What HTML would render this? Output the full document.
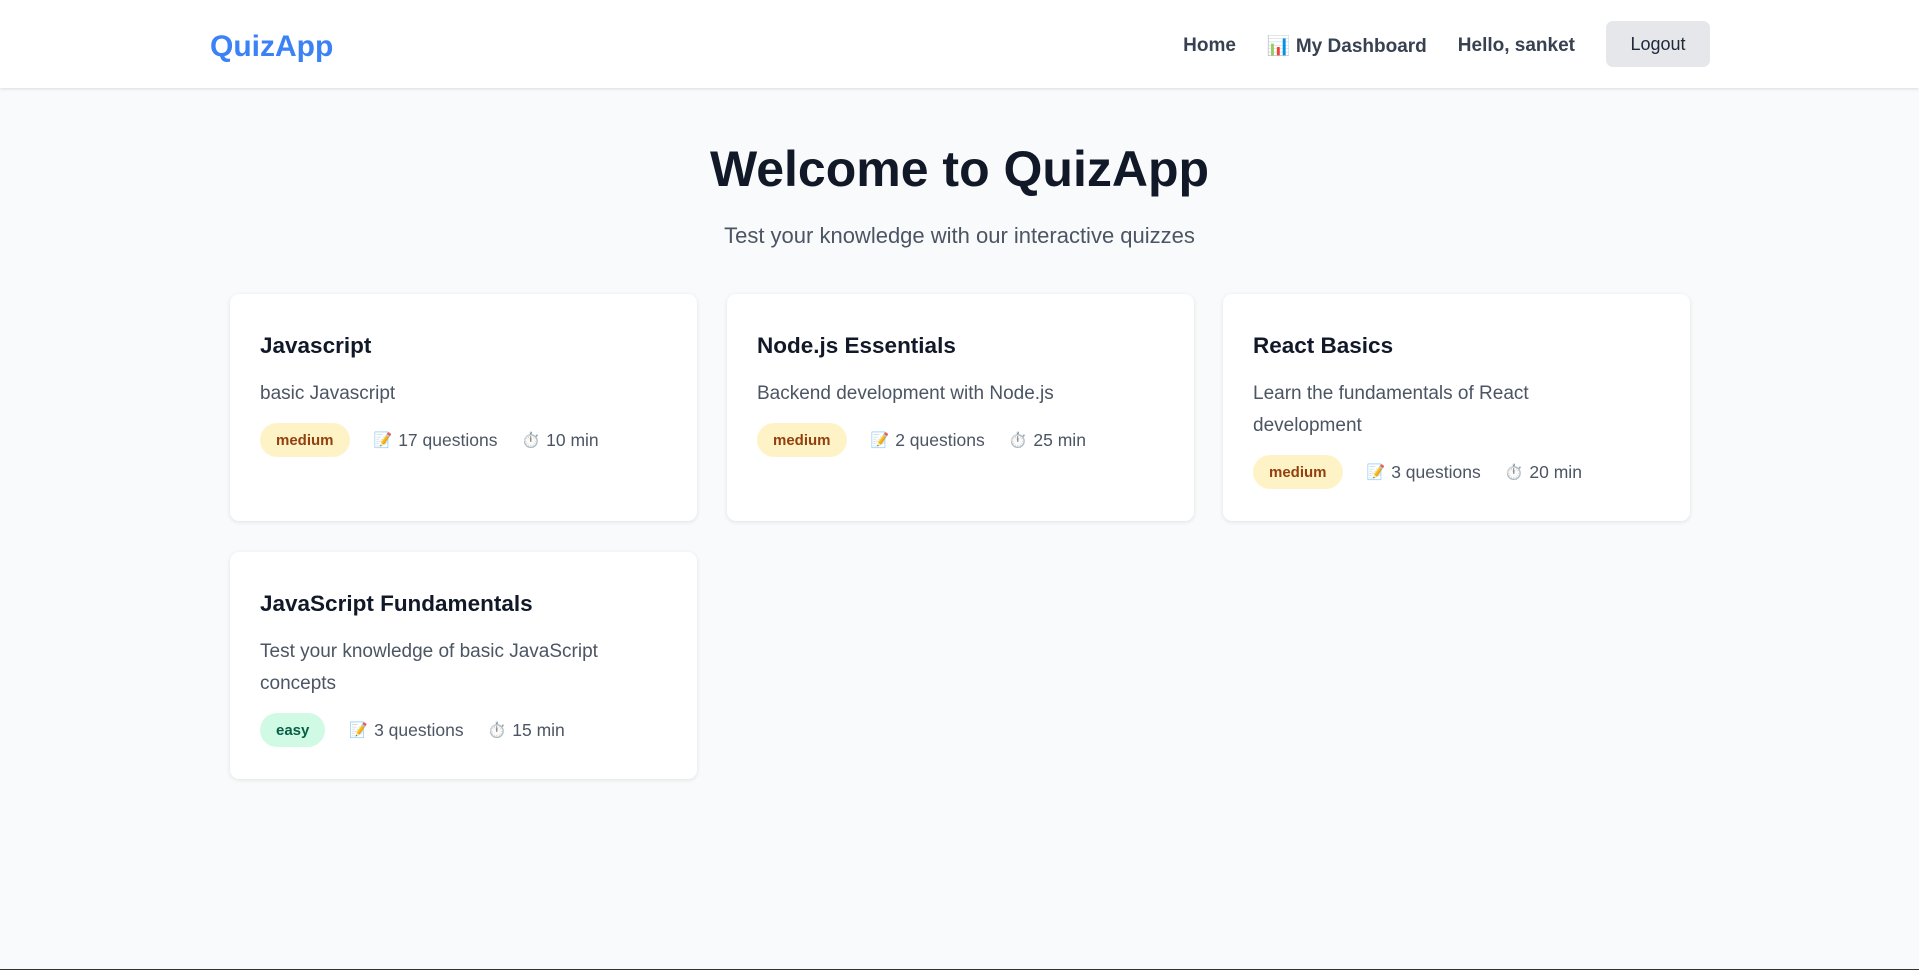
<!DOCTYPE html>
<html><head><meta charset="utf-8"><style>
*{box-sizing:border-box;margin:0;padding:0}
body{width:1919px;height:970px;background:#f9fafb;font-family:"Liberation Sans",sans-serif;color:#111827;overflow:hidden;position:relative}
nav{height:88px;background:#fff;box-shadow:0 1px 3px rgba(0,0,0,.12);position:relative}
.logo{position:absolute;left:210px;top:30px;font-size:30px;font-weight:700;color:#3b82f6}
.links{position:absolute;right:209px;top:21px;display:flex;align-items:center;height:46px;font-size:19px;font-weight:600;color:#374151}
.links span{margin-right:31px;position:relative;top:2px}
.btn{background:#e5e7eb;border-radius:7px;width:104px;height:46px;display:flex;align-items:center;justify-content:center;font-weight:400;font-size:18px;color:#1f2937}
h1{position:absolute;top:140px;width:100%;text-align:center;font-size:50px;font-weight:700;color:#111827}
.sub{position:absolute;top:223px;width:100%;text-align:center;font-size:22px;color:#4b5563}
.card{position:absolute;width:467px;height:227px;background:#fff;border-radius:9px;box-shadow:0 1px 4px rgba(0,0,0,.1);padding:37px 30px}
.card h3{font-size:22.5px;font-weight:600;color:#111827;margin-bottom:17px;line-height:30px}
.card p{font-size:19px;line-height:32px;color:#4b5563;margin-bottom:13px}
.meta{display:flex;align-items:center;font-size:17.5px;color:#4b5563}
.badge{height:34px;border-radius:17px;padding:0 16px;display:flex;align-items:center;font-size:15px;font-weight:600;margin-right:24px}
.med{background:#fef3c7;color:#92400e}
.easy{background:#d1fae5;color:#065f46}
.meta .i{font-size:15px;margin-right:6px}
.meta .q{margin-right:24px}
.line{position:absolute;left:0;bottom:0;width:100%;height:1px;background:#333}
</style></head><body>
<nav><div class="logo">QuizApp</div>
<div class="links"><span>Home</span><span>📊 My Dashboard</span><span>Hello, sanket</span><div class="btn">Logout</div></div></nav>
<h1>Welcome to QuizApp</h1>
<div class="sub">Test your knowledge with our interactive quizzes</div>

<div class="card" style="left:230px;top:294px"><h3>Javascript</h3><p>basic Javascript</p>
<div class="meta"><div class="badge med">medium</div><span class="i">📝</span><span class="q">17 questions</span><span class="i">⏱️</span><span>10 min</span></div></div>

<div class="card" style="left:727px;top:294px"><h3>Node.js Essentials</h3><p>Backend development with Node.js</p>
<div class="meta"><div class="badge med">medium</div><span class="i">📝</span><span class="q">2 questions</span><span class="i">⏱️</span><span>25 min</span></div></div>

<div class="card" style="left:1223px;top:294px"><h3>React Basics</h3><p>Learn the fundamentals of React<br>development</p>
<div class="meta"><div class="badge med">medium</div><span class="i">📝</span><span class="q">3 questions</span><span class="i">⏱️</span><span>20 min</span></div></div>

<div class="card" style="left:230px;top:552px"><h3>JavaScript Fundamentals</h3><p>Test your knowledge of basic JavaScript<br>concepts</p>
<div class="meta"><div class="badge easy">easy</div><span class="i">📝</span><span class="q">3 questions</span><span class="i">⏱️</span><span>15 min</span></div></div>
<div class="line"></div>
</body></html>
